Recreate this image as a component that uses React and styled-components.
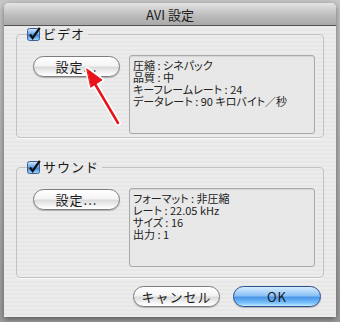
import { createGlobalStyle, styled } from "styled-components";

const GlobalStyle = createGlobalStyle`
  html, body {
    margin: 0;
    padding: 0;
    background: #a6a6a6;
  }
  body {
    font-family: "Noto Sans CJK JP", "Liberation Sans", sans-serif;
    color: #1a1a1a;
  }
`;

const Screen = styled.div`
  width: 340px;
  height: 322px;
  padding: 3px 4px 0;
  box-sizing: border-box;
  background: linear-gradient(#c8c8c8, #9c9c9c);
`;

const Window = styled.div`
  position: relative;
  width: 332px;
  height: 314px;
  display: flex;
  flex-direction: column;
  background: repeating-linear-gradient(#ececec 0 2px, #e7e7e7 2px 4px);
  box-shadow: 0 2px 6px rgba(0, 0, 0, 0.45);
  border-radius: 5px 5px 0 0;
  overflow: hidden;
`;

const TitleBar = styled.div`
  height: 22px;
  flex-shrink: 0;
  display: flex;
  align-items: center;
  justify-content: center;
  font-size: 13px;
  color: #202020;
  background: linear-gradient(#e4e4e4, #bdbdbd 55%, #a9a9a9);
  border-bottom: 1px solid #555;
`;

const Content = styled.div`
  display: flex;
  flex-direction: column;
  padding: 1px 12px 0;
  gap: 22px;
`;

const Group = styled.fieldset`
  margin: 0;
  padding: 0 8px 0 10px;
  border: 1px solid #c2c2c2;
  border-radius: 4px;
  box-shadow: 0 1px 0 #f8f8f8;
  min-width: 0;
`;

const Legend = styled.legend`
  display: flex;
  align-items: center;
  gap: 2px;
  margin: 0;
  padding: 0 3px 0 0;
  font-size: 13px;
  line-height: 14px;
  letter-spacing: 1px;
`;

const Row = styled.div`
  display: flex;
  align-items: flex-start;
  gap: 9px;
  padding: 14px 0 ${(p) => p.$bottom}px 6px;
`;

const Button = styled.button`
  width: ${(p) => p.$width}px;
  height: 21px;
  margin-top: ${(p) => p.$offset || 0}px;
  flex-shrink: 0;
  padding: 0;
  font-family: inherit;
  font-size: 13px;
  line-height: 19px;
  letter-spacing: 1px;
  color: #1a1a1a;
  border: 1px solid #7d7d7d;
  border-radius: 11px;
  background: linear-gradient(#ffffff, #f4f4f4 45%, #dcdcdc 55%, #f6f6f6 85%, #ffffff);
  box-shadow: 0 1px 1px rgba(0, 0, 0, 0.25);
`;

const DefaultButton = styled(Button)`
  border-color: #2a4f8f;
  background: linear-gradient(#d6ecff, #8cc2f5 45%, #4a97e8 55%, #7cc4ff 85%, #c7ecff);
`;

const InfoBox = styled.div`
  width: 186px;
  height: 79px;
  box-sizing: border-box;
  padding: 3px 3px;
  border: 1px solid #a9a9a9;
  border-radius: 3px;
  background: #e8e8e8;
  box-shadow: inset 0 1px 1px rgba(0, 0, 0, 0.08);
  font-size: 11px;
  line-height: 12px;
  font-feature-settings: "palt";
  color: #222;
`;

const Line = styled.div`
  height: 12px;
  white-space: nowrap;
`;

const Footer = styled.div`
  display: flex;
  justify-content: flex-end;
  gap: 13px;
  margin-top: auto;
  padding: 0 15px 10px 0;
`;

const Arrow = styled.svg`
  position: absolute;
  left: 76px;
  top: 61px;
  pointer-events: none;
`;

function Check() {
  return (
    <svg width="14" height="14" viewBox="0 0 14 14">
      <defs>
        <linearGradient id="cb" x1="0" y1="0" x2="0" y2="1">
          <stop offset="0" stopColor="#d9ecfc" />
          <stop offset="0.45" stopColor="#6aa7e8" />
          <stop offset="0.55" stopColor="#3d86d8" />
          <stop offset="1" stopColor="#a9dcff" />
        </linearGradient>
      </defs>
      <rect x="0.5" y="1.5" width="12" height="12" rx="2" fill="url(#cb)" stroke="#3a5f94" />
      <path d="M3 7.5 L5.6 11 L12.8 0.8" fill="none" stroke="#111" strokeWidth="2.2" />
    </svg>
  );
}

function Section({ title, lines, bottom }) {
  return (
    <Group>
      <Legend>
        <Check />
        {title}
      </Legend>
      <Row $bottom={bottom}>
        <Button $width={87} $offset={1}>
          設定...
        </Button>
        <InfoBox>
          {lines.map((line) => (
            <Line key={line}>{line}</Line>
          ))}
        </InfoBox>
      </Row>
    </Group>
  );
}

export default function App() {
  return (
    <>
      <GlobalStyle />
      <Screen>
        <Window>
          <TitleBar>AVI 設定</TitleBar>
          <Content>
            <Section
              title="ビデオ"
              bottom={3}
              lines={[
                "圧縮 : シネパック",
                "品質 : 中",
                "キーフレームレート : 24",
                "データレート : 90 キロバイト／秒",
              ]}
            />
            <Section
              title="サウンド"
              bottom={10}
              lines={["フォーマット : 非圧縮", "レート : 22.05 kHz", "サイズ : 16", "出力 : 1"]}
            />
          </Content>
          <Footer>
            <Button $width={87}>キャンセル</Button>
            <DefaultButton $width={88}>OK</DefaultButton>
          </Footer>
          <Arrow width="44" height="66" viewBox="0 0 44 66">
            <g strokeLinejoin="round" strokeLinecap="round">
              <path d="M38 59 L15 20" stroke="#fff" strokeWidth="6" />
              <path d="M7 5 L22 16 L11 23 Z" fill="#fff" stroke="#fff" strokeWidth="4.5" />
              <path d="M38 59 L15 20" stroke="#e8141a" strokeWidth="2.5" />
              <path d="M7 5 L22 16 L11 23 Z" fill="#e8141a" stroke="#e8141a" strokeWidth="1" />
            </g>
          </Arrow>
        </Window>
      </Screen>
    </>
  );
}
